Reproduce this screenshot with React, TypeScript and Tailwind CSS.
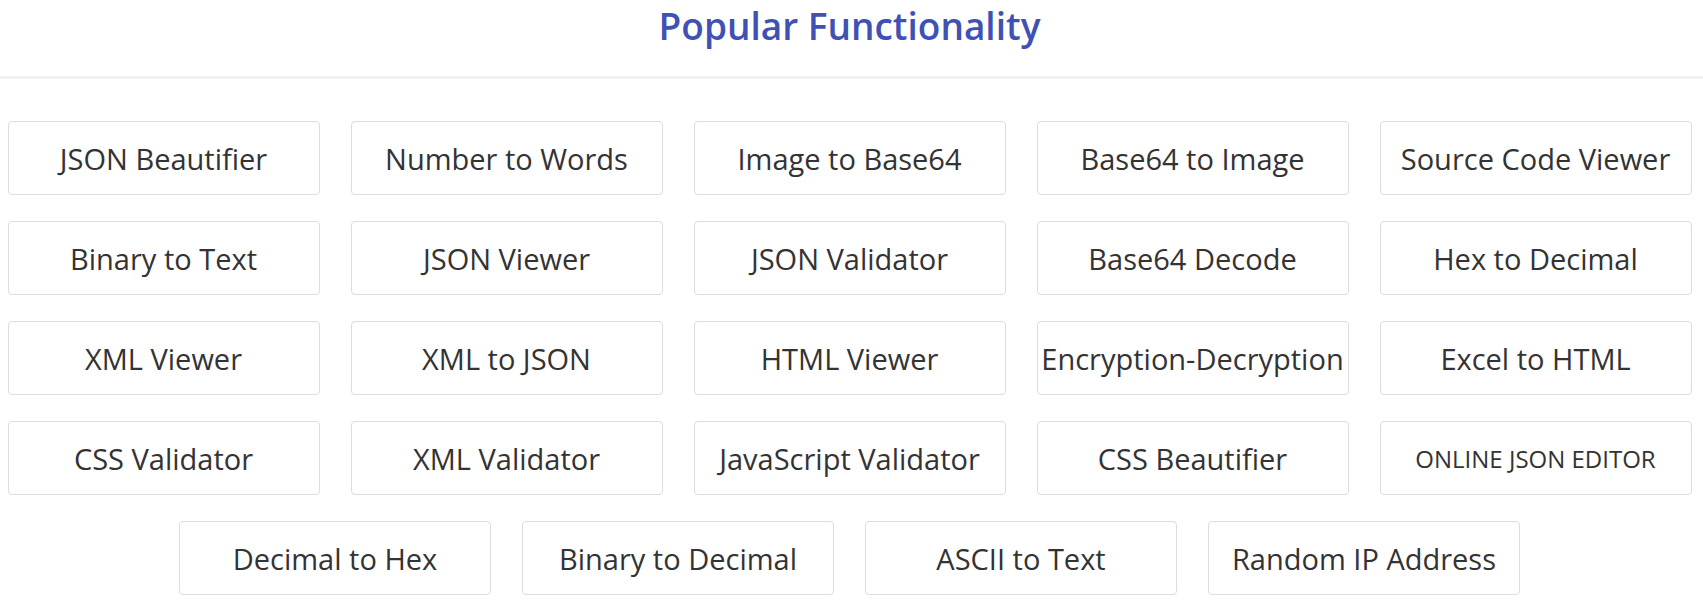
const TOOLS: { label: string; small?: boolean }[] = [
  { label: 'JSON Beautifier' },
  { label: 'Number to Words' },
  { label: 'Image to Base64' },
  { label: 'Base64 to Image' },
  { label: 'Source Code Viewer' },
  { label: 'Binary to Text' },
  { label: 'JSON Viewer' },
  { label: 'JSON Validator' },
  { label: 'Base64 Decode' },
  { label: 'Hex to Decimal' },
  { label: 'XML Viewer' },
  { label: 'XML to JSON' },
  { label: 'HTML Viewer' },
  { label: 'Encryption-Decryption' },
  { label: 'Excel to HTML' },
  { label: 'CSS Validator' },
  { label: 'XML Validator' },
  { label: 'JavaScript Validator' },
  { label: 'CSS Beautifier' },
  { label: 'ONLINE JSON EDITOR', small: true },
  { label: 'Decimal to Hex' },
  { label: 'Binary to Decimal' },
  { label: 'ASCII to Text' },
  { label: 'Random IP Address' },
]

export default function App() {
  return (
    <div
      className="min-h-screen bg-white"
      style={{ fontFamily: '"Open Sans", "Noto Sans", sans-serif' }}
    >
      {/* Title bar */}
      <div className="h-[79px] pt-[7px] pr-[4px] flex justify-center border-b-[3px] border-[#f2f2f2]">
        <h1 className="text-[37px] leading-none font-semibold text-[#3f51b5]">
          Popular Functionality
        </h1>
      </div>

      {/* Tool links */}
      <div className="flex justify-center pr-[4px] pt-[42px]">
        <div className="w-[1684px] flex flex-wrap justify-center gap-x-[31px] gap-y-[26px]">
          {TOOLS.map((tool) => (
            <a
              key={tool.label}
              href="#"
              className={`w-[312px] h-[74px] pt-[2px] flex items-center justify-center border border-[#dddddd] rounded-[4px] text-[#333333] whitespace-nowrap ${
                tool.small ? 'text-[24px]' : 'text-[29px]'
              }`}
            >
              {tool.label}
            </a>
          ))}
        </div>
      </div>
    </div>
  )
}
